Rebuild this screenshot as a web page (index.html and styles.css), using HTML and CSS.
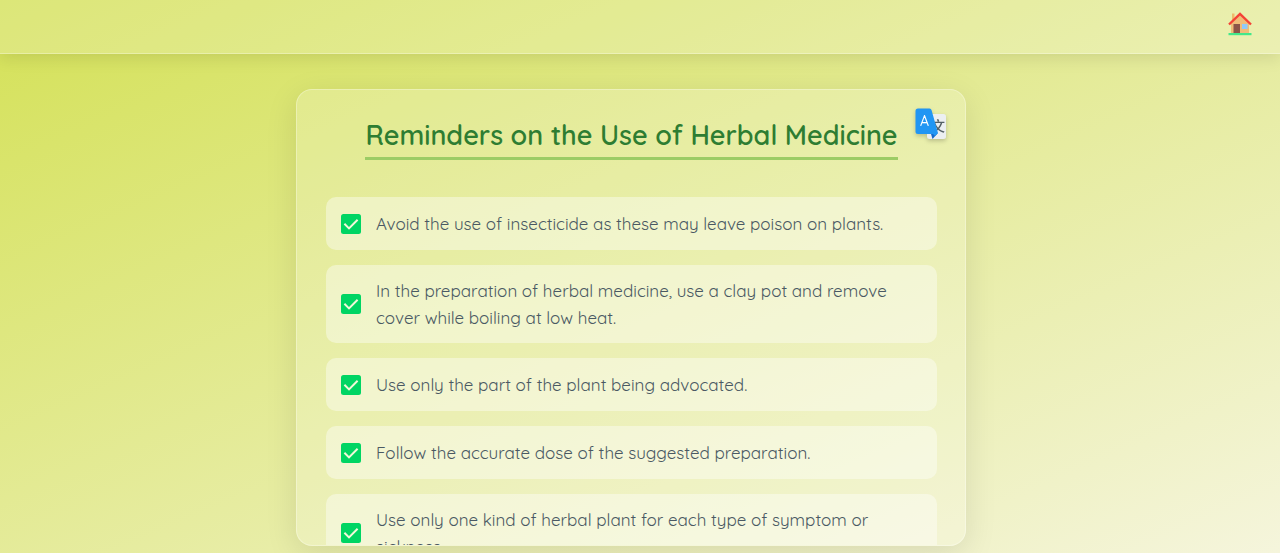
FILE: index.html
```html
<!DOCTYPE html>
<html lang="en">
<head>
<meta charset="utf-8">
<meta name="viewport" content="width=device-width, initial-scale=1">
<title>Reminders on the Use of Herbal Medicine</title>
<link rel="stylesheet" href="styles.css">
</head>
<body>
<svg class="defs" aria-hidden="true">
  <symbol id="check" viewBox="0 0 20 20">
    <rect width="20" height="20" rx="2.5" fill="#00d563"/>
    <path d="M3.4 9.800l4.600 4.600 8.600-8.700" fill="none" stroke="#f1f8d8" stroke-width="2"/>
  </symbol>
</svg>
<header class="topbar">
  <a class="home" href="#" aria-label="Home">
    <svg viewBox="0 0 24 24" aria-hidden="true">
      <path d="M4 1.500h2.500v7H4z" fill="#efb96b"/>
      <path d="M12 2.500L3 11v11h18V11z" fill="#f0bd78"/>
      <path d="M1 12.500L12 2 23 12.500" fill="none" stroke="#f44336" stroke-width="2.400"/>
      <path d="M5.500 12h6.500v9H5.500z" fill="#8d5548"/>
      <path d="M14 12h5.500v5H14z" fill="#90caf9"/>
      <path d="M.5 21h23v2.200H.5z" fill="#42e88a"/>
    </svg>
  </a>
</header>
<main class="page">
  <section class="card">
    <button class="translate" type="button" aria-label="Translate">
      <svg viewBox="0 0 32 32" aria-hidden="true">
        <rect x="12" y="6" width="19" height="25" rx="2.5" fill="#eceff1"/>
        <text class="glyph-han" x="16" y="22.5">文</text>
        <path d="M16 26l7-1-5.500 6z" fill="#1669c9"/>
        <path d="M3 .5h11.500a2 2 0 0 1 2 1.500L23 25l-3 3-2-2H3a2.500 2.500 0 0 1-2.500-2.500V3A2.500 2.500 0 0 1 3 .5z" fill="#2196f3"/>
        <text class="glyph-latin" x="5" y="18">A</text>
      </svg>
    </button>
    <h1 class="title">Reminders on the Use of Herbal Medicine</h1>
    <ul class="list">
      <li class="item"><svg class="check" aria-hidden="true"><use href="#check"/></svg><span>Avoid the use of insecticide as these may leave poison on plants.</span></li>
      <li class="item"><svg class="check" aria-hidden="true"><use href="#check"/></svg><span>In the preparation of herbal medicine, use a clay pot and remove cover while boiling at low heat.</span></li>
      <li class="item"><svg class="check" aria-hidden="true"><use href="#check"/></svg><span>Use only the part of the plant being advocated.</span></li>
      <li class="item"><svg class="check" aria-hidden="true"><use href="#check"/></svg><span>Follow the accurate dose of the suggested preparation.</span></li>
      <li class="item"><svg class="check" aria-hidden="true"><use href="#check"/></svg><span>Use only one kind of herbal plant for each type of symptom or sickness.</span></li>
    </ul>
  </section>
</main>
</body>
</html>
```
FILE: styles.css
```css
* { box-sizing: border-box; }

body {
  margin: 0;
  height: 100vh;
  display: flex;
  flex-direction: column;
  overflow: hidden;
  background: linear-gradient(to bottom right, #d4e157, #f5f5dc);
  font-family: Quicksand, Lato, sans-serif;
  color: #4a5963;
}

.defs { display: none; }

.topbar {
  display: flex;
  justify-content: flex-end;
  padding: 12px 28px 17px;
  background: rgba(255, 255, 255, 0.2);
  border-bottom: 1px solid rgba(255, 255, 255, 0.3);
  box-shadow: 0 4px 16px rgba(0, 0, 0, 0.1);
}

.home, .home svg { display: block; width: 24px; height: 24px; }

.page {
  flex: 1;
  min-height: 0;
  display: flex;
  justify-content: center;
  padding: 35px 42px 7px 24px;
}

.card {
  position: relative;
  width: 100%;
  max-width: 670px;
  padding: 27px 28px 0 29px;
  overflow: hidden;
  background: rgba(255, 255, 255, 0.2);
  border: 1px solid rgba(255, 255, 255, 0.3);
  border-radius: 16px;
  box-shadow: 0 8px 32px rgba(0, 0, 0, 0.1);
}

.translate {
  position: absolute;
  top: 18px;
  right: 18px;
  padding: 0;
  border: 0;
  background: none;
  cursor: pointer;
  filter: drop-shadow(0 2px 2px rgba(0, 0, 0, 0.2));
}

.translate svg { display: block; width: 32px; height: 32px; }

.glyph-latin { font: 500 14px Quicksand, Lato, sans-serif; fill: #fff; }
.glyph-han { font: 500 14px "Noto Sans CJK SC", sans-serif; fill: #546066; }

.title {
  width: fit-content;
  margin: 0 auto 37px;
  padding-bottom: 4px;
  border-bottom: 3px solid #9ccc65;
  color: #2e7d32;
  font-size: 27px;
  font-weight: 600;
  line-height: 36px;
}

.list {
  display: flex;
  flex-direction: column;
  gap: 15px;
  margin: 0;
  padding: 0;
  list-style: none;
}

.item {
  display: flex;
  align-items: center;
  gap: 15px;
  min-height: 53px;
  padding: 12px 15px;
  background: rgba(255, 255, 255, 0.4);
  border-radius: 10px;
  font-size: 17px;
  line-height: 27px;
}

.check { flex: none; width: 20px; height: 20px; }
```
